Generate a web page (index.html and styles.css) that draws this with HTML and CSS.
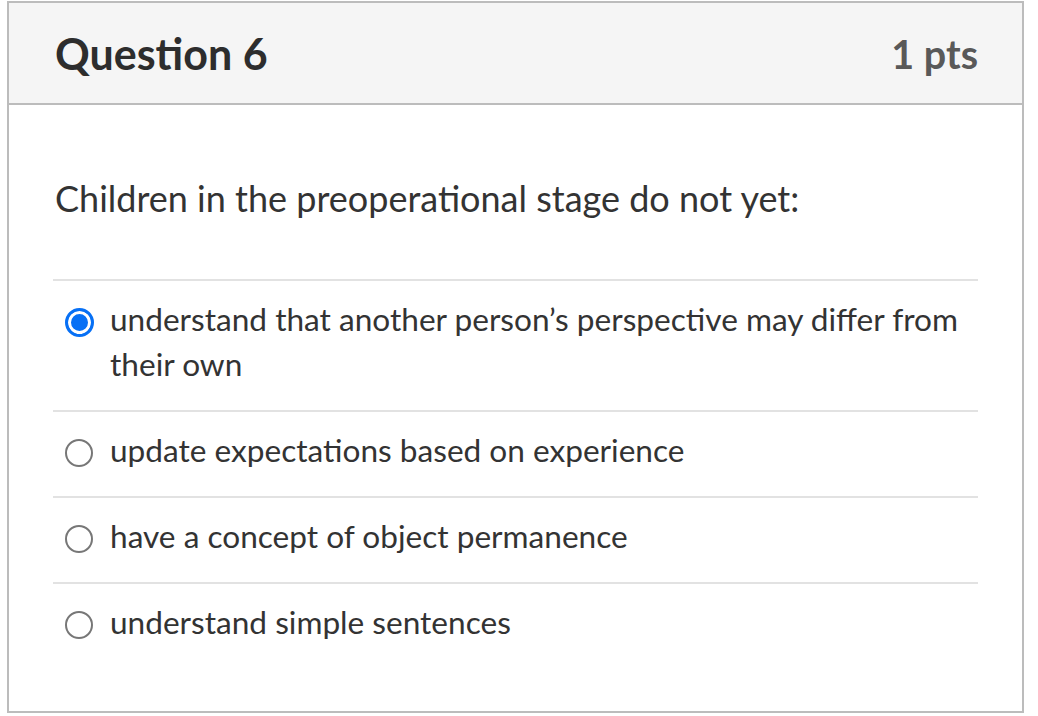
FILE: index.html
```html
<!DOCTYPE html>
<html>
<head>
<meta charset="utf-8">
<link rel="stylesheet" href="styles.css">
</head>
<body>
<div class="card">
  <div class="header">
    <div class="title">Question 6</div>
    <div class="pts">1 pts</div>
  </div>
  <div class="content">
    <div class="question">Children in the preoperational stage do not yet:</div>
    <div class="answers">
      <div class="answer">
        <span class="radio checked"></span>
        <span class="label">understand that another person’s perspective may differ from their own</span>
      </div>
      <div class="answer">
        <span class="radio"></span>
        <span class="label">update expectations based on experience</span>
      </div>
      <div class="answer">
        <span class="radio"></span>
        <span class="label">have a concept of object permanence</span>
      </div>
      <div class="answer">
        <span class="radio"></span>
        <span class="label">understand simple sentences</span>
      </div>
    </div>
  </div>
</div>
</body>
</html>
```
FILE: styles.css
```css
html, body {
  margin: 0;
  padding: 0;
  background: #fff;
}
body {
  font-family: Lato, "Open Sans", sans-serif;
  color: #333;
  padding: 1px 0 0 7px;
}
.card {
  width: 1017px;
  height: 712px;
  border: 2px solid #bcbcbc;
  box-sizing: border-box;
  display: flex;
  flex-direction: column;
}
.header {
  background: #f5f5f5;
  border-bottom: 2px solid #bcbcbc;
  height: 102px;
  box-sizing: border-box;
  display: flex;
  align-items: center;
  justify-content: space-between;
  padding: 0 44px 0 46px;
}
.title {
  font-size: 43px;
  font-weight: 700;
  color: #2d2d2d;
}
.pts {
  font-size: 39.5px;
  font-weight: 700;
  color: #595959;
}
.content {
  padding: 0 44px 0 44px;
}
.question {
  font-size: 36px;
  line-height: 44px;
  padding: 71px 0 59px 2px;
}
.answer {
  border-top: 2px solid #e2e2e2;
  display: flex;
  align-items: flex-start;
  padding: 16px 0 23px 12px;
  font-size: 31.6px;
  line-height: 45px;
}
.radio {
  flex: none;
  width: 28px;
  height: 28px;
  box-sizing: border-box;
  border: 2px solid #777;
  border-radius: 50%;
  margin: 11px 17px 0 0;
  background: #fff;
}
.radio.checked {
  width: 29px;
  height: 29px;
  border: 3px solid #0770f5;
  background: #0770f5;
  box-shadow: inset 0 0 0 3px #fff;
  margin-right: 16px;
}
.label {
  flex: 1;
}
```
